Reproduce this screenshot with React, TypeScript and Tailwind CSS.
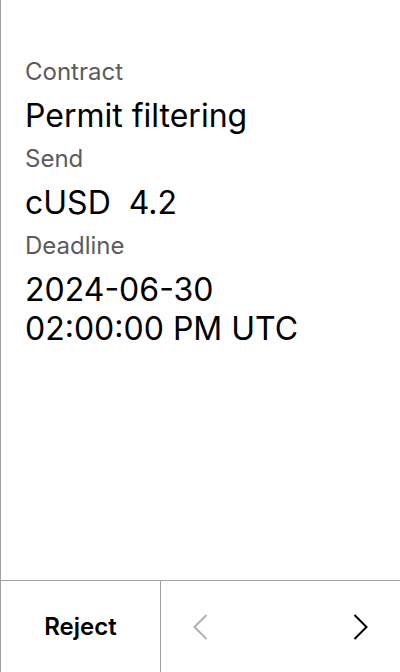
import React from "react";

function Field({ label, value }: { label: string; value: React.ReactNode }) {
  return (
    <div className="flex flex-col">
      <span className="text-[24px] leading-[32px] text-[#5c5c5c]">{label}</span>
      <span className="mt-[8px] text-[32px] leading-[39px] text-black">{value}</span>
    </div>
  );
}

export default function App() {
  return (
    <div
      className="flex h-[672px] w-[400px] flex-col border-l border-[#a0a0a0] bg-white"
      style={{ fontFamily: "Inter, 'Noto Sans', sans-serif" }}
    >
      {/* Details */}
      <div className="flex flex-1 flex-col gap-[8px] px-6 pt-[56px]">
        <Field label="Contract" value="Permit filtering" />
        <Field label="Send" value={<span className="whitespace-pre">cUSD  4.2</span>} />
        <Field
          label="Deadline"
          value={
            <>
              2024-06-30
              <br />
              02:00:00 PM UTC
            </>
          }
        />
      </div>

      {/* Bottom actions */}
      <div className="flex h-[92px] border-t border-[#a0a0a0]">
        <button className="flex w-[160px] items-center justify-center border-r border-[#a0a0a0] text-[24px] font-semibold text-black">
          Reject
        </button>
        <div className="flex flex-1 items-center justify-between px-[32px]">
          <svg width="15" height="26" viewBox="0 0 15 26" fill="none">
            <path d="M13.5 1 1.5 13l12 12" stroke="#b0b0b0" strokeWidth="2" />
          </svg>
          <svg width="15" height="26" viewBox="0 0 15 26" fill="none">
            <path d="M1.5 1l12 12-12 12" stroke="#000" strokeWidth="2" />
          </svg>
        </div>
      </div>
    </div>
  );
}
